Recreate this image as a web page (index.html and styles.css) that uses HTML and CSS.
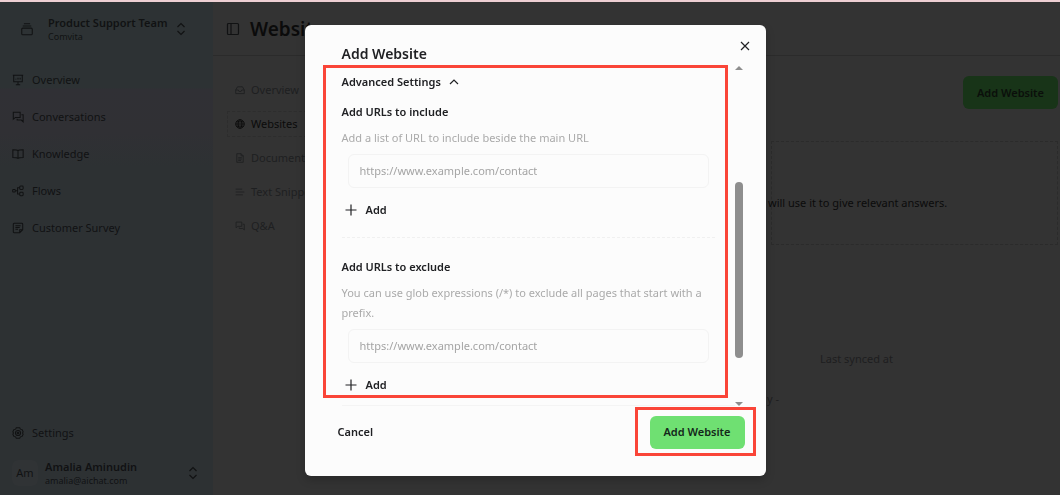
FILE: index.html
```html
<!DOCTYPE html>
<html lang="en">
<head>
<meta charset="utf-8">
<title>Websites</title>
<link rel="stylesheet" href="styles.css">
</head>
<body>
<div class="app">
  <aside class="sidebar">
    <button class="team" type="button">
      <svg class="icon team-icon" viewBox="0 0 16 16"><rect x="2" y="7" width="12" height="7.5" rx="1.2"/><path d="M3.2 4.5h9.6M4.5 2h7"/></svg>
      <span class="stack"><strong>Product Support Team</strong><small>Comvita</small></span>
      <svg class="icon chevrons" viewBox="0 0 10 14"><path d="M1.5 5 5 1.5 8.500 5M1.500 9 5 12.500 8.500 9"/></svg>
    </button>
    <nav class="menu">
      <a href="#"><svg class="icon" viewBox="0 0 14 14"><path d="M1 1.500h12M2 1.500v7.500h10V1.500M7 9v3.500M4.500 12.500h5M4.500 6.500v-1M7 6.500v-2M9.500 6.500v-2"/></svg>Overview</a>
      <a href="#"><svg class="icon" viewBox="0 0 14 14"><path d="M1.500 1.500h8v6H4L1.500 9.500zM11 4.500h2v8L10.800 10.500H6V9"/></svg>Conversations</a>
      <a href="#"><svg class="icon" viewBox="0 0 14 14"><path d="M7 3C6 2 4 2 1 2v9c3 0 5 0 6 1 1-1 3-1 6-1V2c-3 0-5 0-6 1zM7 3v9"/></svg>Knowledge</a>
      <a href="#"><svg class="icon" viewBox="0 0 14 14"><rect x=".8" y="5.200" width="3" height="3" rx=".8"/><rect x="9" y="1.200" width="4" height="4" rx="1"/><rect x="9" y="8.500" width="4" height="4" rx="1"/><path d="M3.800 6.700H6.500M9 3.200H6.500v7.300H9"/></svg>Flows</a>
      <a href="#"><svg class="icon" viewBox="0 0 14 14"><path d="M2.500 1.500h9a1 1 0 0 1 1 1V9L9 12.500H2.500a1 1 0 0 1-1-1v-9a1 1 0 0 1 1-1zM12.500 9H9v3.500M4 4.500h6M4 6.500h5M4 8.500h3"/></svg>Customer Survey</a>
    </nav>
    <nav class="menu menu-bottom">
      <a href="#"><svg class="icon" viewBox="0 0 14 14"><path d="M5 1h4l.8 1.500 2 .5L13 5.500 12.300 7l.7 1.500L11.800 11l-2 .5L9 13H5l-.8-1.500-2-.5L1 8.500 1.700 7 1 5.500 2.200 3l2-.5z"/><circle cx="7" cy="7" r="3"/><circle cx="7" cy="7" r="1"/></svg>Settings</a>
    </nav>
    <button class="user" type="button">
      <span class="avatar">Am</span>
      <span class="stack"><strong>Amalia Aminudin</strong><small>amalia@aichat.com</small></span>
      <svg class="icon chevrons" viewBox="0 0 10 14"><path d="M1.500 5 5 1.500 8.500 5M1.500 9 5 12.500 8.500 9"/></svg>
    </button>
  </aside>

  <main class="main">
    <header class="header">
      <svg class="icon" viewBox="0 0 14 14"><rect x="1.500" y="1.500" width="11" height="11" rx="1"/><path d="M5 1.500v11"/></svg>
      <h1>Websites</h1>
    </header>
    <div class="columns">
      <nav class="subnav">
        <a href="#"><svg class="icon" viewBox="0 0 14 14"><path d="M1 7l2.500-4.500h7L13 7v5H1zM1 7h3.500l1 2h3l1-2H13"/></svg>Overview</a>
        <a href="#" class="active"><svg class="icon" viewBox="0 0 14 14"><circle cx="7" cy="7" r="6"/><ellipse cx="7" cy="7" rx="2.700" ry="6"/><path d="M1 7h12M2 4h10M2 10h10"/></svg>Websites</a>
        <a href="#"><svg class="icon" viewBox="0 0 14 14"><path d="M2.500 1H8.500l3 3v9h-9zM8.500 1v3h3M4.500 6.500h5M4.500 8.500h5M4.500 10.500h4"/></svg>Documents</a>
        <a href="#"><svg class="icon" viewBox="0 0 14 14"><path d="M1 3h9M1 7h12M1 11h10"/></svg>Text Snippets</a>
        <a href="#"><svg class="icon" viewBox="0 0 14 14"><path d="M1.500 1.500h8v6H4L1.500 9.500zM11 4.500h2v8L10.800 10.500H6V9"/></svg>Q&amp;A</a>
      </nav>
      <section class="content">
        <button class="button button-dim" type="button">Add Website</button>
        <div class="hint"><p>will use it to give relevant answers.</p></div>
        <p class="synced">Last synced at</p>
        <p class="source">y -</p>
      </section>
    </div>
  </main>
</div>

<div class="overlay">
  <div class="dialog" role="dialog" aria-labelledby="dialog-title">
    <header class="dialog-header">
      <h2 id="dialog-title">Add Website</h2>
      <button class="close" type="button" aria-label="Close"><svg class="icon" viewBox="0 0 10 10"><path d="M1 1l8 8M9 1 1 9"/></svg></button>
    </header>
    <div class="dialog-body">
      <form class="form">
        <button class="toggle" type="button">Advanced Settings<svg class="icon" viewBox="0 0 10 10"><path d="M1 7l4-4 4 4"/></svg></button>
        <section class="group">
          <label for="include">Add URLs to include</label>
          <p>Add a list of URL to include beside the main URL</p>
          <input id="include" type="text" placeholder="https://www.example.com/contact">
          <button class="add" type="button"><svg class="icon" viewBox="0 0 12 12"><path d="M6 .5v11M.5 6h11"/></svg>Add</button>
        </section>
        <section class="group">
          <label for="exclude">Add URLs to exclude</label>
          <p>You can use glob expressions (/*) to exclude all pages that start with a prefix.</p>
          <input id="exclude" type="text" placeholder="https://www.example.com/contact">
          <button class="add" type="button"><svg class="icon" viewBox="0 0 12 12"><path d="M6 .5v11M.5 6h11"/></svg>Add</button>
        </section>
      </form>
      <div class="scrollbar">
        <svg viewBox="0 0 8 4"><path d="M0 4 4 0l4 4z"/></svg>
        <span class="track"><span class="thumb"></span></span>
        <svg viewBox="0 0 8 4"><path d="M0 0h8L4 4z"/></svg>
      </div>
      <span class="mark mark-form"></span>
    </div>
    <footer class="dialog-footer">
      <button class="cancel" type="button">Cancel</button>
      <span class="submit"><button class="button" type="button">Add Website</button><span class="mark mark-submit"></span></span>
    </footer>
  </div>
</div>
</body>
</html>
```
FILE: styles.css
```css
* { box-sizing: border-box; }
body {
  margin: 0;
  font: 11px/20px "Noto Sans", "Open Sans", sans-serif;
  color: #111213;
  background: #333;
}
h1, h2, p { margin: 0; }
a { color: inherit; text-decoration: none; }
button { padding: 0; border: 0; background: none; font: inherit; color: inherit; text-align: left; }
.icon { flex: none; width: 12px; height: 12px; fill: none; stroke: currentColor; stroke-width: 1.2; }

.app { display: flex; min-height: 100vh; border-top: 2px solid #edcfd3; }
.sidebar {
  display: flex;
  flex-direction: column;
  width: 213px;
  padding: 9px 0 6px;
  background: linear-gradient(#2d3234 0, #2d3234 86px, #303035 87px, #303034 130px, #2d3133 165px);
}
.team, .user { display: flex; align-items: center; }
.team { height: 36px; padding-left: 20px; gap: 14px; }
.team-icon { width: 14px; height: 14px; }
.team .chevrons { margin-left: -6px; }
.chevrons { width: 10px; height: 14px; }
.stack { display: flex; flex-direction: column; }
.stack strong { font-weight: 600; line-height: 14px; }
.stack small { font-size: 9px; line-height: 13px; }
.menu { display: flex; flex-direction: column; gap: 17px; margin-top: 23px; padding-left: 12px; }
.menu a { display: flex; align-items: center; gap: 8px; }
.menu-bottom { margin-top: auto; }
.user { height: 32px; margin-top: 14px; padding: 0 15px 0 12px; gap: 7px; }
.user .chevrons { margin-left: auto; }
.avatar { width: 26px; height: 26px; border-radius: 6px; background: #303335; line-height: 26px; text-align: center; }

.main { flex: 1; min-width: 0; }
.header { display: flex; align-items: center; gap: 10px; height: 54px; padding-left: 13px; border-bottom: 1px solid #2b2b2b; }
.header .icon { width: 14px; height: 14px; }
.header h1 { font-size: 19px; font-weight: 600; line-height: 26px; color: #0b0b0b; }
.columns { display: flex; justify-content: space-between; padding: 20px 2px 0 14px; }
.subnav { display: flex; flex-direction: column; gap: 8px; width: 80px; padding-top: 1px; color: #1e1f21; white-space: nowrap; }
.subnav a { display: flex; align-items: center; gap: 6px; height: 26px; padding-left: 7px; border: 1px dashed transparent; }
.subnav .icon { width: 10px; height: 10px; }
.subnav .active { color: #0b0b0b; border-color: #2d2d2d; }
.content { display: flex; flex-direction: column; width: 291px; }
.button { width: 95px; height: 33px; border-radius: 6px; background: #6fe072; font-weight: 600; color: #14271a; text-align: center; }
.button-dim { align-self: flex-end; background: #183418; color: #0b0f0b; }
.hint { height: 104px; margin: 32px 0 0 4px; padding-top: 51px; border: 1px dashed #2b2b2b; color: #0b0b0b; }
.hint p { margin-left: -4px; }
.synced { margin: 104px 0 0 53px; color: #1e1e20; }
.source { margin-top: 20px; color: #1e1e20; }

.overlay {
  position: fixed;
  inset: 0;
  display: grid;
  place-items: center;
  padding: 5px 0 0 10px;
}
.dialog {
  width: 461px;
  padding: 16px 16px 27px 37px;
  border-radius: 6px;
  background: #fcfcfc;
  color: #202124;
  box-shadow: 0 4px 10px rgba(0, 0, 0, .2);
}
.dialog-header { display: flex; justify-content: space-between; height: 25px; }
.dialog-header h2 { font-size: 14px; font-weight: 600; line-height: 25px; }
.close { height: 10px; line-height: 0; }
.close .icon { width: 10px; height: 10px; }
.dialog-body { position: relative; display: flex; justify-content: space-between; }
.form { flex: 1; padding-top: 6px; border-bottom: 1px solid #f4f4f4; }
.toggle { display: flex; align-items: center; gap: 8px; font-weight: 600; }
.toggle .icon { width: 10px; height: 10px; }
.group { display: flex; flex-direction: column; margin-right: 20px; padding: 10px 0 17px; }
.group:last-child { padding: 19px 0 10px; border-top: 1px dashed #f0f0f0; }
.group label { font-weight: 600; }
.group p { margin: 6px 0; color: #aaa; }
.group input {
  height: 34px;
  margin: 0 6px 12px;
  padding: 0 11px;
  border: 1px solid #f3f3f3;
  border-radius: 6px;
  background: #fcfcfc;
  font: inherit;
}
.group input::placeholder { color: #a4a4a4; opacity: 1; }
.add { display: flex; align-items: center; gap: 9px; padding-left: 3px; font-weight: 600; }
.scrollbar { display: flex; flex-direction: column; width: 8px; margin-right: 7px; }
.scrollbar svg { width: 8px; height: 4px; fill: #8e8e8e; }
.track { flex: 1; display: flex; flex-direction: column; padding: 112px 0 44px; }
.thumb { flex: 1; border-radius: 4px; background: #8e8e8e; }
.dialog-footer { display: flex; justify-content: space-between; align-items: center; margin-left: -4px; padding: 10px 5px 0 0; }
.cancel { font-weight: 600; }
.submit { position: relative; display: flex; }
.mark { position: absolute; border: 3px solid #fa4538; pointer-events: none; }
.mark-form { inset: -1px 22px 8px -19px; }
.mark-submit { inset: -9px -11px -7px -15px; }
```
